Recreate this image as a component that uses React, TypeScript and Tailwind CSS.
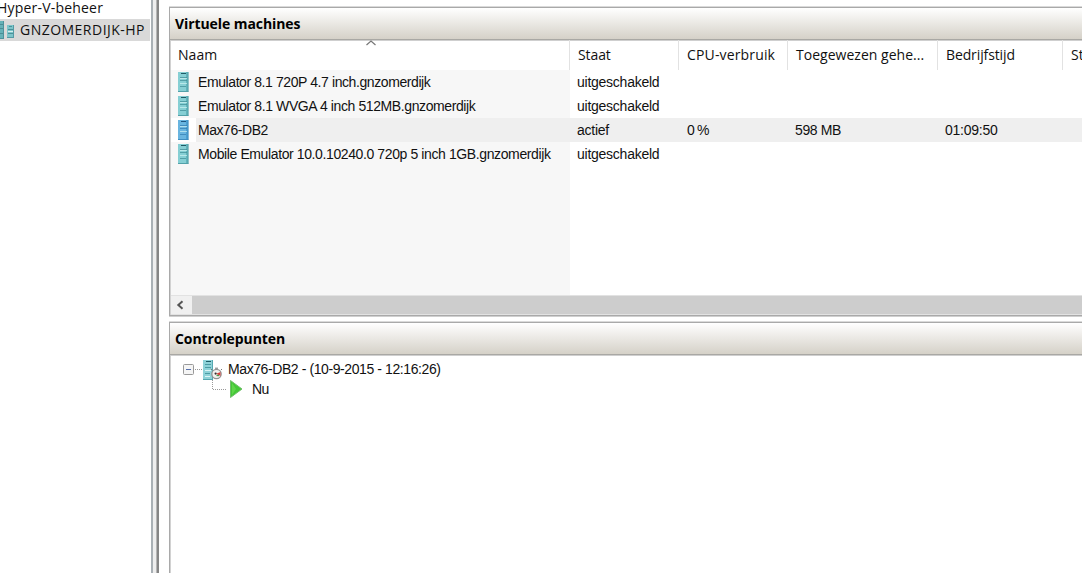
import type { ReactNode } from "react";

const machines = [
  { name: "Emulator 8.1 720P 4.7 inch.gnzomerdijk", state: "uitgeschakeld", tracking: "tracking-[-0.41px]" },
  { name: "Emulator 8.1 WVGA 4 inch 512MB.gnzomerdijk", state: "uitgeschakeld", tracking: "tracking-[-0.4px]" },
  { name: "Max76-DB2", state: "actief", cpu: "0 %", memory: "598 MB", uptime: "01:09:50", active: true, tracking: "tracking-[-0.45px]" },
  { name: "Mobile Emulator 10.0.10240.0 720p 5 inch 1GB.gnzomerdijk", state: "uitgeschakeld", tracking: "tracking-[-0.39px]" },
];

function ServerIcon({ blue = false, className = "" }: { blue?: boolean; className?: string }) {
  const light = blue ? "#74bce4" : "#93d8dc";
  const mid = blue ? "#4a9fd2" : "#62b4bb";
  const dark = blue ? "#357fb3" : "#438f98";
  return (
    <svg className={`shrink-0 ${className}`} width="11" height="20" viewBox="0 0 11 20">
      <rect width="10.5" height="20" fill={mid} />
      <rect width="8" height="19" fill={light} opacity="0.75" />
      <path d="M10 0v20M0 19.5h10.5" stroke={dark} opacity="0.5" />
      <path d="M3 1.5h5" stroke={blue ? "#1d5580" : "#1f5b66"} />
      <path d="M2 5.5h7M2 8.5h7M2 14.5h6" stroke={dark} opacity="0.75" />
      <path d="M2 6.5h7M2 11.5h7" stroke="#d5f6f5" opacity="0.65" />
    </svg>
  );
}

function CheckpointIcon() {
  return (
    <svg width="20" height="20" viewBox="0 0 20 20" className="shrink-0">
      <rect width="10" height="20" fill="#8ed2d8" />
      <path d="M9.5 0v20M0 19.5h10" stroke="#55a7b0" />
      <path d="M3 1.5h5" stroke="#1f5b66" />
      <path d="M2 4.5h6M2 7.5h6M2 13.5h5" stroke="#4b9ca4" />
      <path d="M2 10.5h6M2 16.5h5" stroke="#dbf5f5" />
      <circle cx="13.5" cy="14" r="4.7" fill="#f1f1ef" stroke="#929292" strokeWidth="1.3" />
      <path d="M12 8.2h3M9 10L7.8 8.8M18 10l1-1" stroke="#777" />
      <path d="M13 13.8l4.5-1.8v4z" fill="#d5403c" />
      <path d="M13.5 15.5h2.5" stroke="#4a9c50" strokeWidth="1.3" />
      <circle cx="12.6" cy="13.6" r="1.1" fill="#333" />
    </svg>
  );
}

function PanelTitle({ children }: { children: ReactNode }) {
  return (
    <div className="flex h-[32px] shrink-0 items-center border-b border-[#a9a8a4] bg-linear-to-b from-white to-[#d5d1c8] pb-px pl-[5px] font-['Open_Sans','Noto_Sans',sans-serif] text-[14px] font-bold tracking-[-0.08px] text-black shadow-[0_1px_0_#cfcfcf]">
      {children}
    </div>
  );
}

function Sidebar() {
  return (
    <aside className="w-[151px] shrink-0 overflow-hidden bg-white font-['Open_Sans','Noto_Sans',sans-serif] text-[14px]">
      <div className="flex h-[19px] items-center whitespace-nowrap pb-[5px]">
        <span className="-ml-[3px] tracking-[0.2px]">Hyper-V-beheer</span>
      </div>
      <div className="flex h-[22px] w-[150px] items-center bg-[#d9d9d9] whitespace-nowrap">
        <svg width="15" height="20" viewBox="0 0 15 20" className="shrink-0">
          <path d="M0 1h4v18H0z" fill="#65b2b8" />
          <path d="M3.5 1v18M0 18.5h4" stroke="#4d929b" />
          <path d="M0 4.5h3M0 8.5h3M0 13.5h3" stroke="#4b8d95" />
          <path d="M7 5h7v13H7z" fill="#7cc5ca" />
          <path d="M13.5 5v13M7 17.5h7" stroke="#559aa4" />
          <path d="M9 6.5h3M8 9.5h5M8 13.5h5" stroke="#4b9099" />
          <path d="M8 11.5h5" stroke="#d5eeee" />
        </svg>
        <span className="ml-[5px] pb-[2px] tracking-[0.48px]">GNZOMERDIJK-HP</span>
      </div>
    </aside>
  );
}

function MachinesPanel() {
  const cell = "overflow-hidden whitespace-nowrap";
  const heading = `${cell} border-r border-[#e2e2e2] pl-[8px] pt-[4px]`;
  return (
    <section className="flex h-[309px] shrink-0 flex-col border-y border-l border-[#a9a9a9] bg-white shadow-[inset_1px_0_0_#d2d2d2,0_-1px_0_#dadada,0_1px_0_#cfcfcf]">
      <PanelTitle>Virtuele machines</PanelTitle>
      <div className="relative ml-px grid h-[30px] shrink-0 grid-cols-[399px_109px_109px_150px_125px_19px] font-['Open_Sans','Noto_Sans',sans-serif] text-[14px]">
        <div className={`${heading} !pl-[7px] tracking-[0.05px]`}>Naam</div>
        <div className={`${heading} tracking-[-0.1px]`}>Staat</div>
        <div className={`${heading} tracking-[0.15px]`}>CPU-verbruik</div>
        <div className={`${heading} tracking-[0.02px]`}>Toegewezen gehe...</div>
        <div className={`${heading} tracking-[-0.12px]`}>Bedrijfstijd</div>
        <div className="overflow-hidden pl-[8px] pt-[4px] whitespace-nowrap">St</div>
        <svg className="absolute left-[194px] top-0" width="12" height="6" viewBox="0 0 12 6">
          <path d="M1.5 5L6 1l4.5 4" fill="none" stroke="#777" strokeWidth="1.2" />
        </svg>
      </div>
      <div className="ml-px flex flex-1 flex-col bg-[linear-gradient(to_right,#f7f7f7_399px,#fff_399px)] font-['Liberation_Sans',Arial,sans-serif] text-[14px]">
        {machines.map((vm) => (
          <div key={vm.name} className="grid h-6 grid-cols-[399px_109px_109px_150px_125px_19px]">
            <div className="flex items-center overflow-hidden whitespace-nowrap">
              <div className={vm.active ? "flex h-6 w-[25px] items-center bg-white" : "flex h-6 w-[25px] items-center"}>
                <ServerIcon blue={vm.active} className="mb-[1px] ml-[7px]" />
              </div>
              <div className={`flex h-6 flex-1 items-center pl-[2px] ${vm.tracking} ${vm.active ? "bg-[#efefef]" : ""}`}>{vm.name}</div>
            </div>
            <div className={`${cell} pl-[7px] leading-6 tracking-[-0.25px] ${vm.active ? "bg-[#efefef]" : ""}`}>{vm.state}</div>
            <div className={`${cell} pl-[8px] leading-6 tracking-[-0.8px] ${vm.active ? "bg-[#efefef]" : ""}`}>{vm.cpu}</div>
            <div className={`${cell} pl-[7px] leading-6 tracking-[-0.4px] ${vm.active ? "bg-[#efefef]" : ""}`}>{vm.memory}</div>
            <div className={`${cell} pl-[7px] leading-6 tracking-[-0.25px] ${vm.active ? "bg-[#efefef]" : ""}`}>{vm.uptime}</div>
            <div className={vm.active ? "bg-[#efefef]" : ""} />
          </div>
        ))}
      </div>
      <div className="ml-px flex h-5 shrink-0 border-y border-[#e2e2e2] bg-[#cdcdcd]">
        <div className="flex w-[21px] items-center justify-center bg-[#f0f0f0] pr-[3px]">
          <svg width="8" height="10" viewBox="0 0 8 10">
            <path d="M6.5 1.2L2.3 5l4.2 3.8" fill="none" stroke="#555" strokeWidth="2" />
          </svg>
        </div>
      </div>
    </section>
  );
}

function CheckpointsPanel() {
  return (
    <section className="mt-[6px] flex flex-1 flex-col border-l border-t border-[#a9a9a9] bg-white shadow-[inset_1px_0_0_#d2d2d2,0_-1px_0_#dadada]">
      <PanelTitle>Controlepunten</PanelTitle>
      <div className="ml-px pt-[5px] font-['Liberation_Sans',Arial,sans-serif] text-[14px]">
        <div className="flex h-5 items-center whitespace-nowrap pl-[12px]">
          <svg width="20" height="12" viewBox="0 0 20 12" className="shrink-0">
            <rect x="0.5" y="0.5" width="10" height="10" rx="1" fill="#f5f5f5" stroke="#999" />
            <path d="M3 5.5h5" stroke="#5570ad" />
            <path d="M12 5.5h8" stroke="#999" strokeDasharray="1 1" />
          </svg>
          <CheckpointIcon />
          <span className="ml-[5px] pb-px tracking-[-0.41px]">Max76-DB2 - (10-9-2015 - 12:16:26)</span>
        </div>
        <div className="flex h-5 items-center pl-[40px]">
          <svg width="34" height="20" viewBox="0 0 34 20" className="shrink-0">
            <path d="M1.5 0v9.5H16" fill="none" stroke="#999" strokeDasharray="1 1" />
            <path d="M19.5 0.5v17L31 9z" fill="#43c936" stroke="#70bd6a" />
            <path d="M21 3v12l4-6z" fill="#7be05e" opacity="0.5" />
          </svg>
          <span className="ml-[7px] pb-px tracking-[-0.6px]">Nu</span>
        </div>
      </div>
    </section>
  );
}

export default function App() {
  return (
    <div className="flex h-[573px] w-[1082px] overflow-hidden bg-white text-[#111]">
      <Sidebar />
      <div className="flex w-[8px] shrink-0 border-l-2 border-l-[#a9b0b5] bg-[#eeeeee]">
        <div className="ml-auto w-px bg-[#b5b5b5]" />
        <div className="w-[2px] bg-[#858585]" />
      </div>
      <main className="ml-[10px] flex min-w-0 flex-1 flex-col pt-[7px]">
        <MachinesPanel />
        <CheckpointsPanel />
      </main>
    </div>
  );
}
